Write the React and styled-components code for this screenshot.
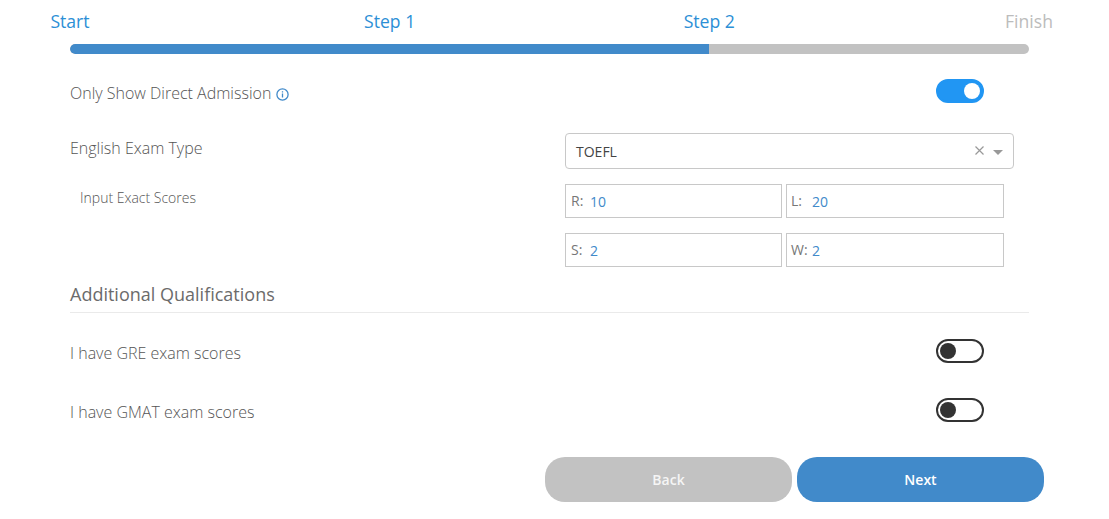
import React from 'react';
import styled, { createGlobalStyle } from 'styled-components';

const GlobalStyle = createGlobalStyle`
	html, body {
		margin: 0;
		padding: 0;
		background: #fff;
		font-family: "Open Sans", "Liberation Sans", sans-serif;
	}
`;

const Page = styled.div`
	width: 1109px;
	height: 519px;
	overflow: hidden;
	box-sizing: border-box;
	padding-top: 9px;
`;

const StepRow = styled.div`
	display: flex;
	justify-content: space-between;
	width: 1039px;
	margin-left: 30px;
	height: 25px;
`;

const StepLabel = styled.div`
	width: 80px;
	text-align: center;
	font-size: 17.6px;
	line-height: 24px;
	color: ${p => (p.$done ? '#2c8fd6' : '#bcbcbc')};
`;

const Track = styled.div`
	width: 959px;
	height: 10px;
	margin: 10px 0 0 70px;
	background: #c2c2c2;
	border-radius: 5px;
	overflow: hidden;
`;

const Fill = styled.div`
	width: 639px;
	height: 100%;
	background: #418aca;
	border-radius: 5px 0 0 5px;
`;

const Content = styled.div`
	width: 959px;
	margin-left: 70px;
`;

const ToggleLine = styled.div`
	display: flex;
	justify-content: space-between;
	align-items: center;
	height: 24px;
	padding-right: 45px;
	margin-top: ${p => p.$top}px;
`;

const Label = styled.div`
	font-size: 16px;
	font-weight: 300;
	line-height: 24px;
	color: #555;
	display: flex;
	align-items: center;
	position: relative;
	top: ${p => p.$shift || 0}px;
`;

const InfoIcon = styled.svg`
	width: 13px;
	height: 13px;
	margin: 3px 0 0 5px;
`;

const Switch = styled.div`
	box-sizing: border-box;
	width: 48px;
	height: 24px;
	border-radius: 12px;
	display: flex;
	align-items: center;
	padding: 0 2px;
	justify-content: ${p => (p.$on ? 'flex-end' : 'flex-start')};
	background: ${p => (p.$on ? '#2196f3' : '#fff')};
	border: 2px solid ${p => (p.$on ? '#2196f3' : '#333')};
`;

const Knob = styled.div`
	width: 16px;
	height: 16px;
	border-radius: 50%;
	background: ${p => (p.$on ? '#fff' : '#333')};
`;

const ExamGrid = styled.div`
	display: grid;
	grid-template-columns: 495px 449px;
	margin-top: 30px;
`;

const ExamLabel = styled(Label)`
	height: 30px;
	align-items: flex-start;
`;

const SubLabel = styled.div`
	font-size: 14px;
	font-weight: 300;
	line-height: 20px;
	color: #555;
	padding: 19px 0 0 10px;
`;

const Select = styled.div`
	box-sizing: border-box;
	height: 36px;
	border: 1px solid #c8c8c8;
	border-radius: 4px;
	display: flex;
	align-items: center;
	padding: 0 10px;
	font-size: 14px;
	color: #444;
`;

const SelectValue = styled.span`
	flex: 1;
`;

const ClearIcon = styled.svg`
	width: 9px;
	height: 9px;
	margin-right: 9px;
	position: relative;
	top: -1px;
`;

const Caret = styled.div`
	width: 0;
	height: 0;
	border-left: 5px solid transparent;
	border-right: 5px solid transparent;
	border-top: 5px solid #999;
	margin-top: 2px;
`;

const ScoreGrid = styled.div`
	display: grid;
	grid-template-columns: 217px 218px;
	column-gap: 4px;
	row-gap: 15px;
	margin-top: 15px;
`;

const ScoreBox = styled.div`
	box-sizing: border-box;
	height: 34px;
	border: 1px solid #c8c8c8;
	display: flex;
	align-items: center;
	padding-left: ${p => p.$pad}px;
	font-size: 14px;
`;

const ScoreKey = styled.span`
	width: ${p => p.$w}px;
	color: #777;
	position: relative;
	top: -1px;
`;

const ScoreValue = styled.span`
	color: #418aca;
`;

const SectionTitle = styled.div`
	margin-top: 15px;
	padding-bottom: 6px;
	border-bottom: 1px solid #eaeaea;
	font-size: 18px;
	line-height: 24px;
	color: #6b6b6b;
`;

const ButtonRow = styled.div`
	display: flex;
	gap: 5px;
	margin: 35px 0 0 545px;
`;

const Button = styled.div`
	width: 247px;
	height: 45px;
	border-radius: 20px;
	display: flex;
	align-items: center;
	justify-content: center;
	font-size: 14px;
	font-weight: 600;
	color: ${p => (p.$primary ? '#fff' : '#f5f5f5')};
	background: ${p => (p.$primary ? '#418aca' : '#c2c2c2')};
`;

const scores = [
	{ key: 'R:', pad: 5, w: 19, value: '10' },
	{ key: 'L:', pad: 4, w: 21, value: '20' },
	{ key: 'S:', pad: 5, w: 19, value: '2' },
	{ key: 'W:', pad: 4, w: 21, value: '2' },
];

export default function App() {
	return (
		<Page>
			<GlobalStyle />
			<StepRow>
				<StepLabel $done>Start</StepLabel>
				<StepLabel $done>Step 1</StepLabel>
				<StepLabel $done>Step 2</StepLabel>
				<StepLabel>Finish</StepLabel>
			</StepRow>
			<Track><Fill /></Track>
			<Content>
				<ToggleLine $top={25}>
					<Label $shift={2}>
						Only Show Direct Admission
						<InfoIcon viewBox="0 0 13 13" fill="none" stroke="#418aca" strokeWidth="1.3">
							<circle cx="6.5" cy="6.5" r="5.6" />
							<path d="M6.5 5.6v3.8M6.5 3.2v1.2" />
						</InfoIcon>
					</Label>
					<Switch $on><Knob $on /></Switch>
				</ToggleLine>
				<ExamGrid>
					<ExamLabel $shift={3}>English Exam Type</ExamLabel>
					<Select>
						<SelectValue>TOEFL</SelectValue>
						<ClearIcon viewBox="0 0 9 9" stroke="#999" strokeWidth="1.2">
							<path d="M.5.5l8 8M8.5.5l-8 8" />
						</ClearIcon>
						<Caret />
					</Select>
					<SubLabel>Input Exact Scores</SubLabel>
					<ScoreGrid>
						{scores.map(s => (
							<ScoreBox key={s.key} $pad={s.pad}>
								<ScoreKey $w={s.w}>{s.key}</ScoreKey>
								<ScoreValue>{s.value}</ScoreValue>
							</ScoreBox>
						))}
					</ScoreGrid>
				</ExamGrid>
				<SectionTitle>Additional Qualifications</SectionTitle>
				<ToggleLine $top={26}>
					<Label $shift={2}>I have GRE exam scores</Label>
					<Switch><Knob /></Switch>
				</ToggleLine>
				<ToggleLine $top={35}>
					<Label $shift={2}>I have GMAT exam scores</Label>
					<Switch><Knob /></Switch>
				</ToggleLine>
			</Content>
			<ButtonRow>
				<Button>Back</Button>
				<Button $primary>Next</Button>
			</ButtonRow>
		</Page>
	);
}
